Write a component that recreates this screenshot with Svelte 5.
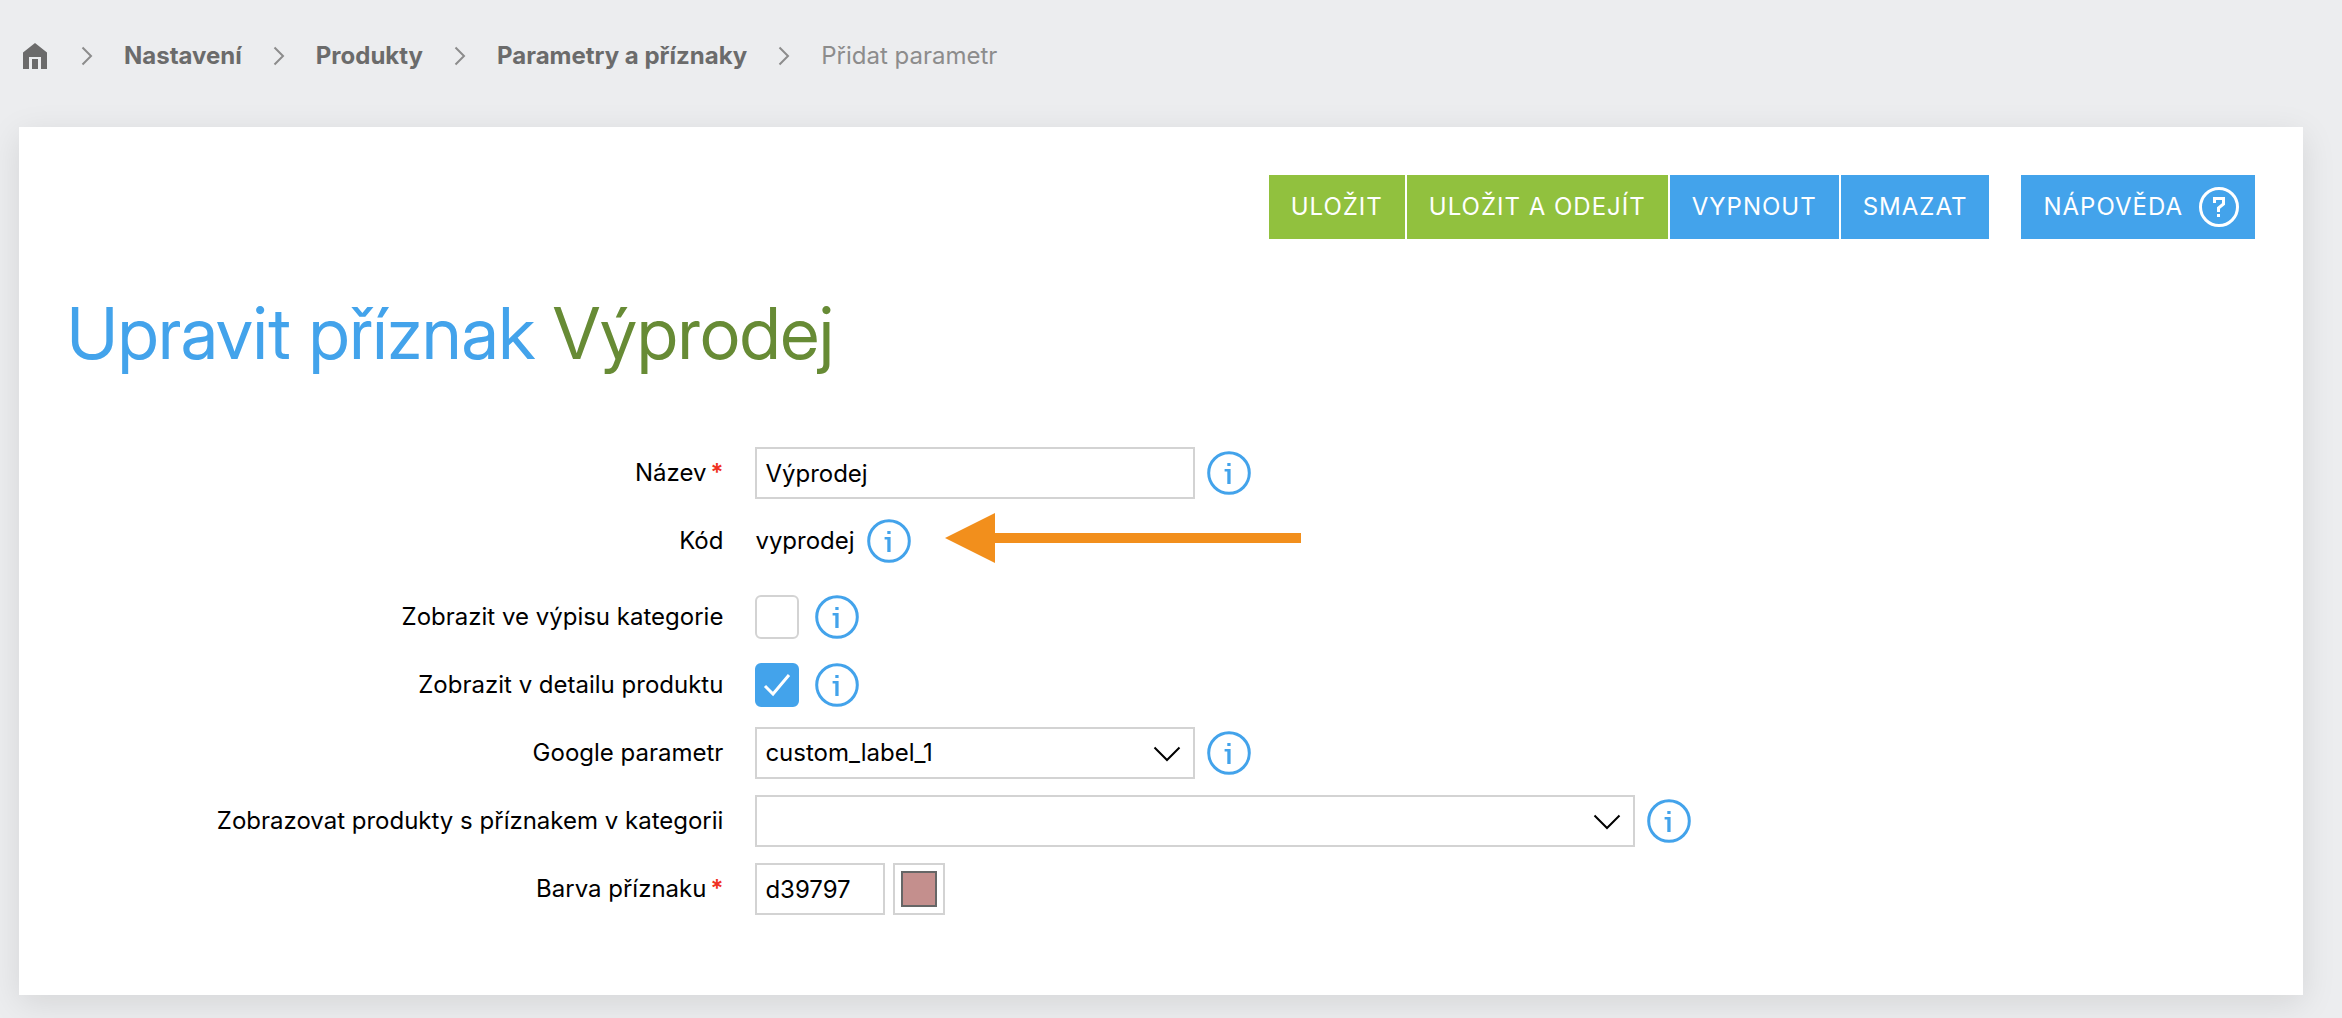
<script>
  const crumbs = ["Nastavení", "Produkty", "Parametry a příznaky"];

  // State
  let name = $state("Výprodej");
  let inCategory = $state(false);
  let inDetail = $state(true);
  let googleLabel = $state("custom_label_1");
  let category = $state("");
  let color = $state("d39797");
  let swatch = $state("#c48f8d");
</script>

{#snippet chevron()}
  <svg class="chevron" viewBox="0 0 12 20" aria-hidden="true">
    <path d="M1.5 1.5 10 10l-8.500 8.500" />
  </svg>
{/snippet}

{#snippet info()}
  <button class="info" type="button" aria-label="Informace">
    <svg viewBox="0 0 44 44" aria-hidden="true">
      <circle cx="22" cy="22" r="20.300" />
      <path d="M20.300 12h3.300v3h-3.300zM17.600 18h6v15h-3.300V20.600h-2.700z" />
    </svg>
  </button>
{/snippet}

{#snippet arrowDown()}
  <svg class="arrow-down" viewBox="0 0 28 16" aria-hidden="true">
    <path d="M1.500 1.500 14 14 26.500 1.500" />
  </svg>
{/snippet}

<nav class="breadcrumbs" aria-label="Navigace">
  <a class="home" href="#home" aria-label="Domů">
    <svg viewBox="0 0 24 26" aria-hidden="true">
      <path d="M12 0 24 9.500V26h-6V14H6v12H0V9.500z" />
      <path d="M9 16h6v10H9z" />
    </svg>
  </a>
  {@render chevron()}
  {#each crumbs as crumb}
    <a href="#{crumb}">{crumb}</a>
    {@render chevron()}
  {/each}
  <span>Přidat parametr</span>
</nav>

<main>
  <div class="actions">
    <button class="save" type="button">ULOŽIT</button>
    <button class="save" type="button">ULOŽIT A ODEJÍT</button>
    <button type="button">VYPNOUT</button>
    <button type="button">SMAZAT</button>
    <button class="help" type="button">
      NÁPOVĚDA
      <svg viewBox="0 0 40 40" aria-hidden="true">
        <circle cx="20" cy="20" r="18.500" />
        <path d="M15.500 16v-4.500h9V17L19.500 21v4" />
        <path d="M19.500 27v3" />
      </svg>
    </button>
  </div>

  <h1>Upravit příznak <strong>Výprodej</strong></h1>

  <form>
    <div class="row">
      <label for="name">Název<i>*</i></label>
      <div class="field">
        <input id="name" class="text" type="text" bind:value={name} />
        {@render info()}
      </div>
    </div>

    <div class="row code">
      <span class="label">Kód</span>
      <div class="field">
        <span>vyprodej</span>
        {@render info()}
        <svg class="pointer" viewBox="0 0 356 50" aria-hidden="true">
          <path d="M0 25 50 0v20h306v10H50v20z" />
        </svg>
      </div>
    </div>

    <div class="row">
      <label for="in-category">Zobrazit ve výpisu kategorie</label>
      <div class="field wide-gap">
        <span class="check">
          <input id="in-category" type="checkbox" bind:checked={inCategory} />
          <svg viewBox="0 0 44 44" aria-hidden="true"><path d="M10 23l8 8 16-19" /></svg>
        </span>
        {@render info()}
      </div>
    </div>

    <div class="row">
      <label for="in-detail">Zobrazit v detailu produktu</label>
      <div class="field wide-gap">
        <span class="check">
          <input id="in-detail" type="checkbox" bind:checked={inDetail} />
          <svg viewBox="0 0 44 44" aria-hidden="true"><path d="M10 23l8 8 16-19" /></svg>
        </span>
        {@render info()}
      </div>
    </div>

    <div class="row">
      <label for="google">Google parametr</label>
      <div class="field">
        <span class="select">
          <select id="google" bind:value={googleLabel}>
            <option>custom_label_1</option>
          </select>
          {@render arrowDown()}
        </span>
        {@render info()}
      </div>
    </div>

    <div class="row">
      <label for="category">Zobrazovat produkty s příznakem v kategorii</label>
      <div class="field">
        <span class="select wide">
          <select id="category" bind:value={category}>
            <option value=""></option>
          </select>
          {@render arrowDown()}
        </span>
        {@render info()}
      </div>
    </div>

    <div class="row">
      <label for="color">Barva příznaku<i>*</i></label>
      <div class="field narrow-gap">
        <input id="color" class="text short" type="text" bind:value={color} />
        <input class="swatch" type="color" aria-label="Vybrat barvu" bind:value={swatch} />
      </div>
    </div>
  </form>
</main>

<style>
  :global(body) {
    background: #ecedef;
    color: #000;
    font-family: Inter, sans-serif;
    font-size: 24px;
    line-height: 32px;
  }

  button,
  input,
  select {
    box-sizing: border-box;
    margin: 0;
    font: inherit;
    color: inherit;
  }

  svg {
    display: block;
    fill: none;
  }

  .breadcrumbs {
    display: flex;
    align-items: center;
    gap: 31px;
    padding: 40px 23px 0;
    color: #8c8c8c;
  }

  .breadcrumbs a {
    color: #6b6b6b;
    font-weight: 700;
    text-decoration: none;
  }

  .home {
    margin-right: 3px;
  }

  .home svg {
    width: 24px;
    height: 26px;
    fill: #6b6b6b;
  }

  .chevron {
    width: 12px;
    height: 20px;
    stroke: #8c8c8c;
    stroke-width: 2;
  }

  main {
    margin: 55px 39px 23px 19px;
    padding: 48px 48px 80px;
    background: #fff;
    box-shadow: 0 8px 32px rgba(0, 0, 0, 0.1);
  }

  .actions {
    display: flex;
    justify-content: flex-end;
    gap: 2px;
  }

  .actions button {
    height: 64px;
    padding: 0 22px;
    border: 0;
    background: #43a3eb;
    color: #fff;
    letter-spacing: 1px;
  }

  .actions .save {
    background: #91c13e;
  }

  .actions .help {
    display: flex;
    align-items: center;
    gap: 16px;
    margin-left: 30px;
    padding-right: 16px;
  }

  .help svg {
    width: 40px;
    height: 40px;
    stroke: #fff;
    stroke-width: 3;
  }

  h1 {
    margin: 46px 0 66px;
    color: #43a3eb;
    font-family: "Inter Display", Inter, sans-serif;
    font-size: 72px;
    font-variation-settings: "opsz" 32;
    font-weight: 400;
    line-height: 96px;
  }

  h1 strong {
    color: #678b35;
    font-weight: inherit;
  }

  form {
    display: grid;
    gap: 16px;
  }

  .row {
    display: grid;
    grid-template-columns: 30% 1fr;
    gap: 32px;
    align-items: center;
    min-height: 52px;
  }

  .code {
    margin-bottom: 8px;
  }

  label,
  .label {
    text-align: right;
  }

  label i {
    margin-left: 4px;
    color: #f0331f;
    font-style: normal;
    font-weight: 600;
  }

  .field {
    display: flex;
    align-items: center;
    gap: 12px;
  }

  .wide-gap {
    gap: 16px;
  }

  .narrow-gap {
    gap: 8px;
  }

  .text,
  select {
    width: 440px;
    height: 52px;
    padding: 0 8px;
    border: 2px solid #d3d3d3;
    border-radius: 0;
    background: #fff;
  }

  .short {
    width: 130px;
  }

  .info {
    flex: none;
    padding: 0;
    border: 0;
    background: none;
  }

  .info svg {
    width: 44px;
    height: 44px;
  }

  .info circle {
    stroke: #43a3eb;
    stroke-width: 3;
  }

  .info path {
    fill: #43a3eb;
  }

  .pointer {
    width: 356px;
    height: 50px;
    margin: -4px 0 2px 22px;
    fill: #f28f1c;
  }

  .check,
  .select {
    display: grid;
    align-items: center;
  }

  .check > :global(*),
  .select > :global(*) {
    grid-area: 1 / 1;
  }

  .check input {
    width: 44px;
    height: 44px;
    appearance: none;
    border: 2px solid #d3d3d3;
    border-radius: 6px;
    background: #fff;
  }

  .check svg {
    width: 44px;
    height: 44px;
    pointer-events: none;
    stroke: #fff;
    stroke-width: 3;
  }

  .check input:checked {
    border-color: #43a3eb;
    background: #43a3eb;
  }

  .select select {
    appearance: none;
  }

  .wide select {
    width: 880px;
  }

  .arrow-down {
    width: 28px;
    height: 16px;
    justify-self: end;
    margin: 2px 14px 0 0;
    pointer-events: none;
    stroke: #000;
    stroke-width: 2;
  }

  .swatch {
    width: 52px;
    height: 52px;
    padding: 6px;
    appearance: none;
    border: 2px solid #d3d3d3;
    background: #fff;
  }

  .swatch::-webkit-color-swatch-wrapper {
    padding: 0;
  }

  .swatch::-webkit-color-swatch {
    border: 2px solid #666;
    border-radius: 0;
  }
</style>
